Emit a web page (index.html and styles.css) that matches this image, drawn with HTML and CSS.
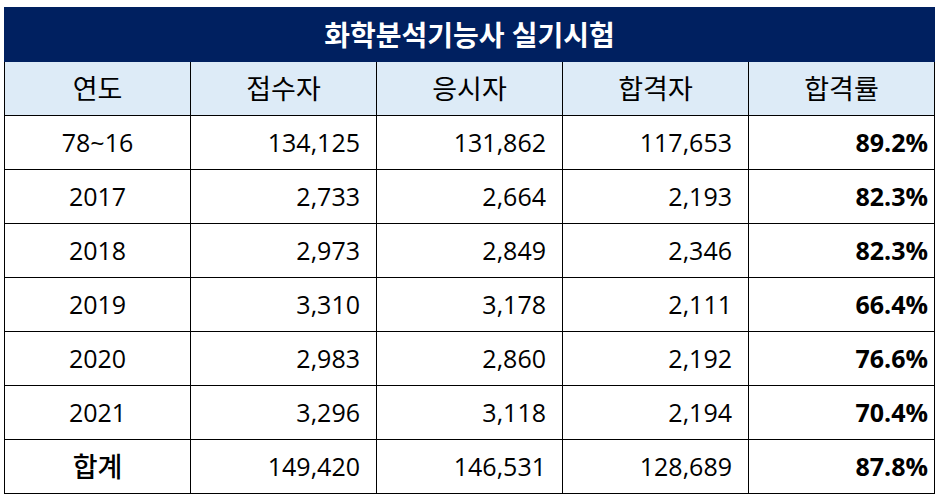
FILE: index.html
```html
<!DOCTYPE html>
<html lang="ko">
<head>
<meta charset="utf-8">
<title>화학분석기능사 실기시험</title>
<link rel="stylesheet" href="styles.css">
</head>
<body>
<div class="wrap">
<table class="stats">
  <colgroup>
    <col class="c"><col class="c"><col class="c"><col class="c"><col class="c">
  </colgroup>
  <thead>
    <tr><th class="title" colspan="5">화학분석기능사 실기시험</th></tr>
    <tr class="head"><th>연도</th><th>접수자</th><th>응시자</th><th>합격자</th><th>합격률</th></tr>
  </thead>
  <tbody>
    <tr><td class="yr">78~16</td><td class="num">134,125</td><td class="num">131,862</td><td class="num">117,653</td><td class="pct">89.2%</td></tr>
    <tr><td class="yr">2017</td><td class="num">2,733</td><td class="num">2,664</td><td class="num">2,193</td><td class="pct">82.3%</td></tr>
    <tr><td class="yr">2018</td><td class="num">2,973</td><td class="num">2,849</td><td class="num">2,346</td><td class="pct">82.3%</td></tr>
    <tr><td class="yr">2019</td><td class="num">3,310</td><td class="num">3,178</td><td class="num">2,111</td><td class="pct">66.4%</td></tr>
    <tr><td class="yr">2020</td><td class="num">2,983</td><td class="num">2,860</td><td class="num">2,192</td><td class="pct">76.6%</td></tr>
    <tr><td class="yr">2021</td><td class="num">3,296</td><td class="num">3,118</td><td class="num">2,194</td><td class="pct">70.4%</td></tr>
    <tr><td class="yr total">합계</td><td class="num">149,420</td><td class="num">146,531</td><td class="num">128,689</td><td class="pct">87.8%</td></tr>
  </tbody>
</table>
</div>
</body>
</html>
```

FILE: styles.css
```css
html, body {
  margin: 0;
  padding: 0;
  background: #ffffff;
}
.wrap {
  padding: 7px 0 0 4px;
}
.stats {
  border-collapse: collapse;
  table-layout: fixed;
  width: 931px;
  font-family: "Open Sans", "Noto Sans CJK KR", sans-serif;
  color: #000000;
}
.stats col.c {
  width: 186px;
}
.stats th,
.stats td {
  border: 1px solid #000000;
  height: 54px;
  padding: 0;
  box-sizing: border-box;
  line-height: 1;
  white-space: nowrap;
}
.stats .title {
  background: #002060;
  border-color: #002060;
  color: #ffffff;
  font-size: 28px;
  font-weight: 700;
  text-align: center;
}
.stats .head th {
  background: #ddebf7;
  font-size: 27px;
  font-weight: 400;
  text-align: center;
}
.stats td {
  font-size: 25px;
}
.stats .yr {
  text-align: center;
}
.stats .total {
  font-size: 27px;
  font-weight: 500;
}
.stats .num {
  text-align: right;
  padding-right: 16px;
}
.stats .pct {
  text-align: right;
  padding-right: 6px;
  font-weight: 700;
}
```
